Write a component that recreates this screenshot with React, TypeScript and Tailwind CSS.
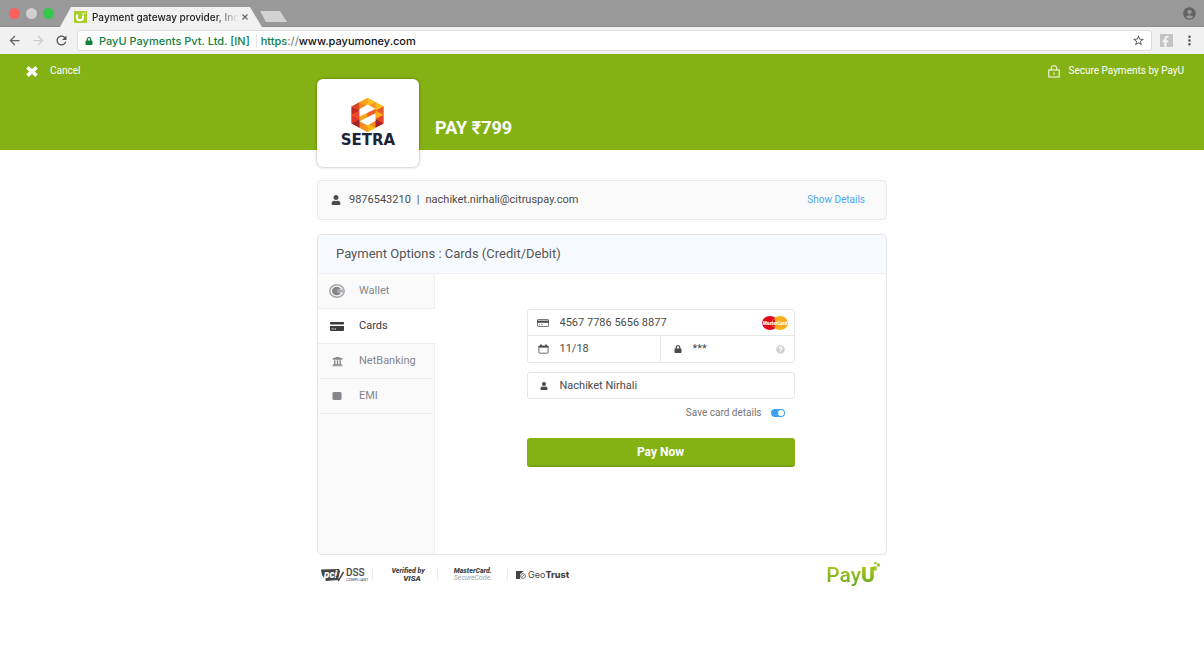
import React, { useState } from 'react';
import { FaFacebookF, FaLock, FaQuestionCircle, FaUniversity, FaUser } from 'react-icons/fa';
import { MdAccountCircle, MdArrowBack, MdArrowForward, MdMoreVert, MdRefresh, MdStarBorder } from 'react-icons/md';

type PaymentMethod = 'wallet' | 'cards' | 'netbanking' | 'emi';

const CreditCardIcon = () => (
  <svg viewBox="0 0 14 9" className="w-[14px] h-[9px]" fill="currentColor">
    <rect width="14" height="2.6" rx="0.8" />
    <path d="M0 4h14v4a1 1 0 0 1-1 1H1a1 1 0 0 1-1-1z" />
    <path d="M1.6 6.6h1.2v1H1.6zM3.4 6.6h1v1h-1zM5 6.6h1v1H5z" fill="#fff" />
  </svg>
);

const CardOutlineIcon = () => (
  <svg viewBox="0 0 12 8" className="w-3 h-2">
    <rect x="0.5" y="0.5" width="11" height="7" rx="0.6" fill="none" stroke="#6a6a6a" strokeWidth="0.9" />
    <path d="M0 1.6h12v2.2H0z" fill="#4a4a4a" />
    <path d="M2 5.7h1.2M4 5.7h2" stroke="#6a6a6a" strokeWidth="0.8" />
  </svg>
);

const CalendarIcon = () => (
  <svg viewBox="0 0 11 10" className="w-[11px] h-[10px]" fill="none" stroke="#4a4a4a">
    <rect x="0.9" y="2" width="9.2" height="7.2" rx="0.8" strokeWidth="0.8" />
    <path d="M0.5 2.8h10" strokeWidth="1.6" />
    <path d="M3 0.6v2M8 0.6v2" strokeWidth="1.8" />
  </svg>
);

const WalletIcon = () => (
  <svg viewBox="0 0 16 14" className="w-4 h-[14px]">
    <ellipse cx="8" cy="7" rx="7.2" ry="6.2" fill="#fafafa" stroke="#a6a7aa" strokeWidth="1.5" />
    <ellipse cx="7.8" cy="7" rx="4.8" ry="4.2" fill="#85868a" />
    <path d="M8 5.4h6v3.2H8z" fill="#a6a7aa" />
    <path d="M10.4 5.4h2.6M10.4 8.6h2.6" stroke="#fafafa" strokeWidth="0.7" />
  </svg>
);

const EmiIcon = () => (
  <svg viewBox="0 0 10 8" className="w-[10px] h-2">
    <rect x="0.5" width="9" height="8" rx="1.4" fill="#85868a" />
  </svg>
);

const MasterCardMark = () => (
  <svg viewBox="0 0 26 14" className="w-[26px] h-[14px] shrink-0" role="img" aria-label="MasterCard">
    <ellipse cx="8" cy="7" rx="8" ry="7" fill="#e4061f" />
    <ellipse cx="18" cy="7" rx="8" ry="7" fill="#fbad1d" />
    <path d="M13 1.8A8 7 0 0 0 13 12.2" fill="#e4061f" />
    <path d="M11.2 3.6h3M10.6 10.4h3" stroke="#f08a1c" strokeWidth="0.7" />
    <text x="13" y="8.8" fontSize="4.8" fontWeight="900" fontStyle="italic" textAnchor="middle" fill="#fff" fontFamily="Roboto, sans-serif">
      MasterCard
    </text>
  </svg>
);

const SetraLogo = () => (
  <div className="flex flex-col items-center">
    <svg viewBox="0 0 32 34" className="w-[33px] h-[34px]">
      <path d="M16 0L0 8.5v17L16 34l16-8.5v-17z" fill="#f28a24" />
      <path d="M16 0L8 4.2 16 8.5z" fill="#f9a51c" />
      <path d="M16 0l8 4.2-8 4.3z" fill="#fdbf1a" />
      <path d="M8 4.2L0 8.5l8 4.2z" fill="#d9472a" />
      <path d="M8 4.2v8.5l8-4.2z" fill="#f58a1f" />
      <path d="M24 4.2v8.5l-8-4.2z" fill="#f7941e" />
      <path d="M24 4.2l8 4.3-8 4.2z" fill="#fdc01a" />
      <path d="M0 8.5l8 4.2-8 4.3z" fill="#c12a26" />
      <path d="M8 12.7V21l-8-4z" fill="#ee4b25" />
      <path d="M0 17l8 4-8 4.5z" fill="#e0342a" />
      <path d="M8 21v8.7l-8-4.2z" fill="#a81f26" />
      <path d="M32 8.5V17l-8-4.3z" fill="#ee5a25" />
      <path d="M32 17l-8-4.3V21z" fill="#fbb01a" />
      <path d="M32 17v8.5L24 21z" fill="#e8432a" />
      <path d="M24 21l8 4.5-8 4.2z" fill="#a81f26" />
      <path d="M8 29.7L16 25.5V34z" fill="#f7941e" />
      <path d="M24 29.7L16 25.5V34z" fill="#fdb813" />
      <path d="M8 18.7L16 14.7v4.6l-8 4z" fill="#f9a51c" />
      <path d="M16 14.7l8-4v4.6l-8 4z" fill="#f15a29" />
      <path d="M16 6.5l8 4.2-16 8v-7.4z" fill="#fff" />
      <path d="M16 27.5l-8-4.2 16-8v7.4z" fill="#fff" />
    </svg>
    <span className="font-['DejaVu_Sans',sans-serif] text-[15px] leading-4 font-bold text-[#1d2438]">SETRA</span>
  </div>
);

const PayULogo = () => (
  <div className="flex items-start" role="img" aria-label="PayU">
    <span className="bg-linear-to-b from-[#b5cf1e] to-[#5fa51f] bg-clip-text text-[21px] leading-[26px] font-medium text-transparent">
      Pay<b className="font-black">U</b>
    </span>
    <svg viewBox="0 0 8 9" className="-ml-[3px] w-2 h-[9px]" fill="#9cc420">
      <path d="M2.4 0h2.2v2.2H2.4zM5 1.6h2.8v2.8H5zM0.6 4.4h4v4h-4z" />
    </svg>
  </div>
);

const BrowserBar = () => (
  <div className="font-[Inter,sans-serif]">
    <div className="flex h-[27px] items-end border-b border-[#8b8b8b] bg-[#999]">
      <div className="flex items-center gap-[6px] pl-[9px] pb-[7px]">
        <span className="size-[11px] rounded-full bg-[#fc605c]" />
        <span className="size-[11px] rounded-full bg-[#d0d0d0]" />
        <span className="size-[11px] rounded-full bg-[#34c84a]" />
      </div>
      <div className="-mb-px ml-[6px] flex h-5 w-[202px] items-center bg-[#f1f1f1] pl-[14px] pr-[13px] [clip-path:polygon(11px_0,190px_0,202px_100%,0_100%)]">
        <svg viewBox="0 0 13 12" className="h-3 w-[13px] shrink-0">
          <rect width="13" height="12" fill="#a9cf2c" />
          <path d="M3 3.4v3.4c0 3.4 6 3.4 6 0V4.4" fill="none" stroke="#fff" strokeWidth="2" />
          <path d="M8.6 2h1.4v1.6H8.6zM10.4 1.2h1.2v1.2h-1.2z" fill="#fff" />
        </svg>
        <span className="ml-[5px] w-[146px] whitespace-nowrap text-[10px] leading-4 font-medium text-[#222] [mask-image:linear-gradient(to_right,black_85%,transparent)]">
          Payment gateway provider, Ind
        </span>
        <button aria-label="Close tab" className="ml-1 shrink-0">
          <svg viewBox="0 0 6 6" className="size-[6px]" stroke="#666" strokeWidth="1.2">
            <path d="M0.5 0.5l5 5M5.5 0.5l-5 5" />
          </svg>
        </button>
      </div>
      <button aria-label="New tab" className="mb-1 -ml-[2px] h-[11px] w-[27px] bg-[#d2d2d2] [clip-path:polygon(0_0,20px_0,100%_100%,6px_100%)]" />
      <MdAccountCircle className="mb-[5px] ml-auto mr-[7px] size-[15px] text-[#636363]" />
    </div>
    <div className="flex h-[27px] items-center bg-[#f1f1f1]">
      <button aria-label="Back" className="ml-[7px] text-[#666]">
        <MdArrowBack className="size-[15px]" />
      </button>
      <button aria-label="Forward" className="ml-[9px] text-[#ccc]">
        <MdArrowForward className="size-[15px]" />
      </button>
      <button aria-label="Reload" className="ml-2 text-[#555]">
        <MdRefresh className="size-[15px]" />
      </button>
      <div className="ml-2 flex h-[21px] flex-1 items-center rounded-[3px] border border-[#dcdcdc] bg-white pl-[7px] pr-[6px] text-[11px] leading-4 font-medium">
        <FaLock className="size-2 text-[#12803f]" />
        <span className="ml-[6px] whitespace-nowrap text-[#12803f]">PayU Payments Pvt. Ltd. [IN]</span>
        <span className="ml-[6px] mr-1 h-[14px] w-px bg-[#e4e4e4]" />
        <span className="flex-1 text-[#111]">
          <span className="text-[#12803f]">https</span>
          <span className="text-[#888]">://</span>www.payumoney.com
        </span>
        <MdStarBorder className="size-[13px] text-[#555]" />
      </div>
      <span className="ml-2 flex size-[13px] items-end justify-end bg-[#c4c4c4] pr-[2px] text-[#f4f4f4]">
        <FaFacebookF className="size-[11px]" />
      </span>
      <button aria-label="Menu" className="ml-[9px] mr-[7px] text-[#555]">
        <MdMoreVert className="size-[15px]" />
      </button>
    </div>
  </div>
);

const methods: { id: PaymentMethod; label: string; icon: React.ReactNode }[] = [
  { id: 'wallet', label: 'Wallet', icon: <WalletIcon /> },
  { id: 'cards', label: 'Cards', icon: <CreditCardIcon /> },
  { id: 'netbanking', label: 'NetBanking', icon: <FaUniversity className="size-[11px]" /> },
  { id: 'emi', label: 'EMI', icon: <EmiIcon /> }
];

const CardForm = () => {
  const [saveCard, setSaveCard] = useState(true);

  return (
    <form className="w-[268px] max-w-full text-[11px] leading-4 text-[#4a4a4a]" onSubmit={(e) => e.preventDefault()}>
      <div className="rounded-[3px] border border-[#e6e6e6]">
        <div className="flex h-[26px] items-center border-b border-[#e6e6e6] pl-[9px] pr-[6px]">
          <label htmlFor="card-number" aria-label="Card number" className="flex w-[23px]">
            <CardOutlineIcon />
          </label>
          <input id="card-number" defaultValue="4567 7786 5656 8877" className="min-w-0 flex-1 outline-none" />
          <MasterCardMark />
        </div>
        <div className="grid h-[26px] grid-cols-2">
          <div className="flex items-center border-r border-[#e6e6e6] pl-[10px]">
            <label htmlFor="expiry" aria-label="Expiry date" className="flex w-[22px]">
              <CalendarIcon />
            </label>
            <input id="expiry" defaultValue="11/18" className="min-w-0 flex-1 outline-none" />
          </div>
          <div className="flex items-center pl-[13px] pr-[9px]">
            <label htmlFor="cvv" aria-label="CVV" className="flex w-[19px]">
              <FaLock className="size-2" />
            </label>
            <input id="cvv" defaultValue="***" className="min-w-0 flex-1 outline-none" />
            <FaQuestionCircle className="size-[9px] shrink-0 text-[#d0d0d0]" />
          </div>
        </div>
      </div>
      <div className="mt-[9px] flex h-[27px] items-center rounded-[3px] border border-[#e6e6e6] pl-3">
        <label htmlFor="holder" aria-label="Name on card" className="flex w-5">
          <FaUser className="size-2" />
        </label>
        <input id="holder" defaultValue="Nachiket Nirhali" className="min-w-0 flex-1 outline-none" />
      </div>
      <div className="mt-[6px] flex items-center justify-end gap-[9px] pr-[10px] text-[10px] text-[#777]">
        <label htmlFor="save-card">Save card details</label>
        <input
          id="save-card"
          type="checkbox"
          checked={saveCard}
          onChange={(e) => setSaveCard(e.target.checked)}
          className="flex h-2 w-[14px] appearance-none items-center rounded-full bg-[#ccc] p-px before:size-[6px] before:rounded-full before:bg-white checked:justify-end checked:bg-[#3ea0f5]"
        />
      </div>
      <button
        type="submit"
        className="mt-[17px] flex h-[29px] w-full items-center justify-center rounded-[3px] border-b-2 border-[#77a010] bg-[#84b113] text-[12px] font-bold text-white"
      >
        Pay Now
      </button>
    </form>
  );
};

const TrustLogos = () => (
  <div className="flex items-center text-[#444]">
    <div className="flex items-center">
      <svg viewBox="0 0 24 14" className="h-[14px] w-6" role="img" aria-label="PCI">
        <path d="M0 1.4L18 1l1 2-2 9-12 1-4-6z" fill="#444" />
        <text x="3" y="10.4" fontSize="10" fontWeight="900" fontStyle="italic" fill="#fff" fontFamily="Roboto, sans-serif">
          pci
        </text>
        <path d="M15 8l2.6 4.4L22.6 4" fill="none" stroke="#444" strokeWidth="1.5" />
      </svg>
      <div className="ml-px flex flex-col">
        <span className="text-[10px] leading-[10px] font-medium">DSS</span>
        <span className="text-[4px] leading-[4px]">COMPLIANT</span>
      </div>
    </div>
    <span className="ml-1 h-3 w-px bg-[#ececec]" />
    <div className="ml-[18px] flex flex-col text-right font-black italic">
      <span className="text-[7px] leading-[7px]">Verified by</span>
      <span className="pr-1 text-[8px] leading-[8px]">VISA</span>
    </div>
    <span className="ml-3 h-3 w-px bg-[#ececec]" />
    <div className="ml-4 flex flex-col text-[7px] leading-[7px] italic">
      <span className="font-black">MasterCard.</span>
      <span className="text-[#a0a0a0]">SecureCode.</span>
    </div>
    <span className="ml-[15px] h-3 w-px bg-[#ececec]" />
    <div className="ml-2 flex items-center gap-[2px]">
      <svg viewBox="0 0 10 8" className="h-2 w-[10px]">
        <path d="M0 0h8L4 3v5H0z" fill="#444" />
        <circle cx="7" cy="5" r="2.4" fill="none" stroke="#777" />
        <path d="M5.4 6.6l3.2-3.2" stroke="#777" strokeWidth="0.8" />
      </svg>
      <span className="font-[Inter,sans-serif] text-[9px] leading-3">
        Geo<b className="font-extrabold">Trust</b>
      </span>
    </div>
  </div>
);

export default function App() {
  const [method, setMethod] = useState<PaymentMethod>('cards');

  return (
    <div className="min-h-screen bg-white font-[Roboto,sans-serif] text-[11px] leading-4">
      <BrowserBar />

      <header className="flex flex-col bg-[#84b113] text-white">
        <div className="flex justify-between pl-[26px] pr-5 pt-[9px] text-[10px]">
          <button className="flex items-center gap-3">
            <svg viewBox="0 0 12 11" className="h-[11px] w-3" stroke="currentColor" strokeWidth="3.6">
              <path d="M1.4 1.4l9.2 8.2M10.6 1.4L1.4 9.6" />
            </svg>
            Cancel
          </button>
          <span className="flex items-center gap-2">
            <svg viewBox="0 0 12 13" className="h-[13px] w-3" fill="none" stroke="currentColor">
              <rect x="0.8" y="5" width="10.4" height="7" />
              <path d="M3.2 5V3.2a2.8 2.6 0 0 1 5.6 0V5M6 7.4v2.4" />
            </svg>
            Secure Payments by PayU
          </span>
        </div>
        <div className="mx-auto -mb-[17px] flex w-[570px] max-w-full items-center gap-4">
          <div className="flex h-[88px] w-[102px] items-center justify-center rounded-md bg-white shadow-[0_0_3px_rgba(0,0,0,0.35)]">
            <SetraLogo />
          </div>
          <h1 className="pt-[10px] text-[18px] leading-6 font-bold">PAY ₹799</h1>
        </div>
      </header>

      <main className="mx-auto mt-[30px] w-[570px] max-w-full">
        <section className="flex h-10 items-center rounded-[4px] border border-[#e9e9e9] bg-[#fafafa] pl-[13px] pr-[21px] text-[#4a4a4a]">
          <FaUser className="size-[10px]" />
          <span className="ml-2">9876543210</span>
          <span className="mx-[6px]">|</span>
          <span>nachiket.nirhali@citruspay.com</span>
          <a href="#details" className="ml-auto text-[10px] text-[#4aa8f0]">
            Show Details
          </a>
        </section>

        <section className="mt-[14px] overflow-hidden rounded-[4px] border border-[#e6e6e6]">
          <h2 className="border-b border-[#eef1f3] bg-[#f6fafe] px-[18px] py-[9px] text-[13px] leading-5 text-[#555]">
            Payment Options : Cards (Credit/Debit)
          </h2>
          <div className="flex min-h-[280px]">
            <nav className="w-[117px] shrink-0 border-r border-[#eee] bg-[#fafafa]">
              {methods.map((item) => (
                <button
                  key={item.id}
                  onClick={() => setMethod(item.id)}
                  className={`flex items-center border-b border-[#eee] py-[9px] pl-[11px] text-left leading-4 ${
                    method === item.id ? 'w-[117px] bg-white text-[#3c3c3c]' : 'w-full text-[#85868a]'
                  }`}
                >
                  <span className="flex w-4 justify-center">{item.icon}</span>
                  <span className="ml-[14px]">{item.label}</span>
                </button>
              ))}
            </nav>
            <div className="flex flex-1 justify-center pt-[35px]">
              <CardForm />
            </div>
          </div>
        </section>

        <footer className="flex items-center justify-between pl-1 pr-[7px] pt-[7px]">
          <TrustLogos />
          <PayULogo />
        </footer>
      </main>
    </div>
  );
}
